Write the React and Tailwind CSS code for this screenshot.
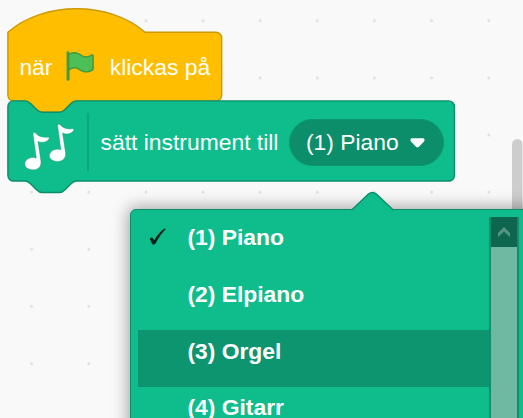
const items = ['(1) Piano', '(2) Elpiano', '(3) Orgel', '(4) Gitarr'];

const notch = 'c2,0 3,1 4,2 l4,4 c1,1 2,2 4,2 h12 c2,0 3,-1 4,-2 l4,-4 c1,-1 2,-2 4,-2';
const notchBack = 'c-2,0 -3,1 -4,2 l-4,4 c-1,1 -2,2 -4,2 h-12 c-2,0 -3,-1 -4,-2 l-4,-4 c-1,-1 -2,-2 -4,-2';
const note =
  'M33 133.4 C33 132 34.8 131.6 35.8 132.8 C39 136.4 43.5 137.2 47.6 136.7 C49.4 136.5 49.6 137.7 48.6 138.9 C46 141.9 42 142.6 37.9 140.9 L40.9 160.5 C41.6 166 38.2 169.3 33.3 169.3 C28.3 169.3 24.7 166.9 24.8 163.3 C25 159.5 29 157 33.2 157.1 C34.8 157.2 35.6 157.5 36.3 157.8 Z';

function Canvas() {
  return (
    <svg className="absolute inset-0" width="523" height="418">
      <defs>
        <pattern id="dots" x="3" y="-7.8" width="57.15" height="57.15" patternUnits="userSpaceOnUse">
          <circle cx="28.6" cy="28.6" r="1.4" fill="#dddddd" />
        </pattern>
      </defs>
      <rect width="523" height="418" fill="url(#dots)" />
      <rect x="512" y="139" width="10.5" height="300" rx="5.2" fill="#cecdce" />
      <g transform="translate(7.9 32.3) scale(1.429)" strokeWidth="1">
        <path
          d={`M0,0 c25,-22 71,-22 96,0 H145.6 a4,4 0 0,1 4,4 v40 a4,4 0 0,1 -4,4 H48 ${notchBack} H4 a4,4 0 0,1 -4,-4 z`}
          fill="#ffbf00"
          stroke="#cc9900"
        />
      </g>
      <g transform="translate(7.9 100.9) scale(1.429)" strokeWidth="1">
        <path
          d={`M0,4 a4,4 0 0,1 4,-4 H12 ${notch} H308.5 a4,4 0 0,1 4,4 v48.1 a4,4 0 0,1 -4,4 H48 ${notchBack} H4 a4,4 0 0,1 -4,-4 z`}
          fill="#0fbd8c"
          stroke="#0b8e69"
        />
      </g>
    </svg>
  );
}

function Flag() {
  return (
    <svg className="ml-[11px] mr-[12px] mt-[-1px] size-[34.3px] shrink-0" viewBox="0 0 24 24">
      <path
        fill="#45993d"
        d="M20.8,3.7c-0.4-0.2-0.9-0.1-1.2,0.2c-2,1.6-4.8,1.6-6.8,0c-2.3-1.9-5.6-2.3-8.3-1v-0.4c0-0.6-0.5-1-1-1s-1,0.4-1,1v18.8c0,0.5,0.5,1,1,1h0.1c0.5,0,1-0.5,1-1v-6.4c1-0.7,2.1-1.2,3.4-1.3c1.2,0,2.4,0.4,3.4,1.2c2.9,2.3,7,2.3,9.8,0c0.3-0.2,0.4-0.5,0.4-0.9V4.7C21.6,4.2,21.3,3.8,20.8,3.7z"
      />
      <path
        fill="#4cbf56"
        d="M20.6,4.8l-0.1,9.1v0.1c-2.5,2-6.1,2-8.6,0c-1.1-0.9-2.5-1.4-4-1.4c-1.2,0.1-2.3,0.5-3.4,1.1V4C7,2.6,10,2.9,12.2,4.6c2.4,1.9,5.7,1.9,8.1,0c0.1,0,0.1-0.1,0.2-0.1C20.6,4.5,20.6,4.7,20.6,4.8z"
      />
    </svg>
  );
}

function HatBlock() {
  return (
    <div className="absolute left-[8px] top-[32px] flex h-[69px] w-[214px] items-center whitespace-nowrap pl-[11.4px] pt-px">
      <span>när</span>
      <Flag />
      <span>klickas på</span>
    </div>
  );
}

function InstrumentBlock() {
  return (
    <div className="absolute left-[8px] top-[101px] flex h-[81px] w-[447px] items-center whitespace-nowrap">
      <svg className="ml-[12px] h-[60px] w-[60px] shrink-0" viewBox="20 111.5 60 60">
        <g fill="#fff" stroke="#0b8e69" strokeOpacity=".45" strokeWidth=".8">
          <path d={note} />
          <path d={note} transform="translate(24.6 -8.4)" />
        </g>
      </svg>
      <div className="ml-[7px] h-[58px] w-[2px] bg-[#0da57a]" />
      <span className="ml-[11.6px] w-[188.4px]">sätt instrument till</span>
      <div className="mt-px flex h-[47px] w-[155px] shrink-0 items-center rounded-full border border-[#0b9670] bg-[#0b8e69] pl-[16px]">
        <span className="mt-[-1px] w-[103px]">(1) Piano</span>
        <svg className="mt-px" width="17" height="12" viewBox="0 0 17 12">
          <path
            d="M3.2 1.2 H13.8 C15.8 1.2 16 3.4 14.8 4.8 L10.2 9.5 C9 10.7 8 10.7 6.8 9.5 L2.2 4.8 C1 3.4 1.2 1.2 3.2 1.2 Z"
            fill="#fff"
          />
        </svg>
      </div>
    </div>
  );
}

function Menu() {
  return (
    <div className="absolute left-[130px] top-[209px] h-[300px] w-[420px] rounded-[6px] border-[1.5px] border-[#0b8e69] bg-[#0fbd8c] shadow-[0_0_16px_2px_rgba(0,0,0,0.35)]">
      <svg className="absolute left-[219px] top-[-19px]" width="46" height="22" viewBox="0 0 46 22">
        <path
          d="M1.5 19.3 L18.4 3.1 Q22.4 -.1 26.4 3.1 L43.5 19.3 V22 H1.5 Z"
          fill="#0fbd8c"
        />
        <path d="M1.5 19.3 L18.4 3.1 Q22.4 -.1 26.4 3.1 L43.5 19.3" fill="none" stroke="#0b8e69" strokeWidth="1.4" />
      </svg>
      <div className="flex pl-[7px] pt-[7px]">
        <ul className="w-[351px] font-bold">
          {items.map((item, i) => (
            <li
              key={item}
              className={`flex h-[56.6px] items-start pt-[7.4px] leading-[26px] ${i === 2 ? 'bg-[#0d956f]' : ''}`}
            >
              <span className="flex w-[49.4px] justify-start pl-[11px] pt-[4px]">
                {i === 0 && (
                  <svg width="18" height="18" viewBox="0 0 19 19">
                    <path
                      d="M.8 11.7 C1.6 9.8 3.4 9.4 4.3 11 L5.4 13 C8.4 7.8 11.8 3.5 15.8 .8 L18 .8 C13.6 5.4 10 10.4 7.1 16 C6 17.5 4 17.8 3.2 16.8 C2.7 15.1 1.9 13.3 .8 11.7 Z"
                      fill="#06251c"
                    />
                  </svg>
                )}
              </span>
              <span>{item}</span>
            </li>
          ))}
        </ul>
        <div className="h-[290px] w-[30px] border-x-2 border-[#0e8e6b] bg-[#6fb8a2]">
          <div className="flex h-[30px] items-center justify-center bg-[#0f664e]">
            <svg width="12" height="12" viewBox="0 0 12 12">
              <path d="M6 1 L12 7 V11 L6 5.4 L0 11 V7 Z" fill="#569582" />
            </svg>
          </div>
        </div>
      </div>
    </div>
  );
}

export default function App() {
  return (
    <div className="relative h-[418px] w-[523px] overflow-hidden bg-[#f9f9f9] font-['Liberation_Sans',Arial,sans-serif] text-[22.86px] leading-[26px] text-white">
      <Canvas />
      <HatBlock />
      <InstrumentBlock />
      <Menu />
    </div>
  );
}
